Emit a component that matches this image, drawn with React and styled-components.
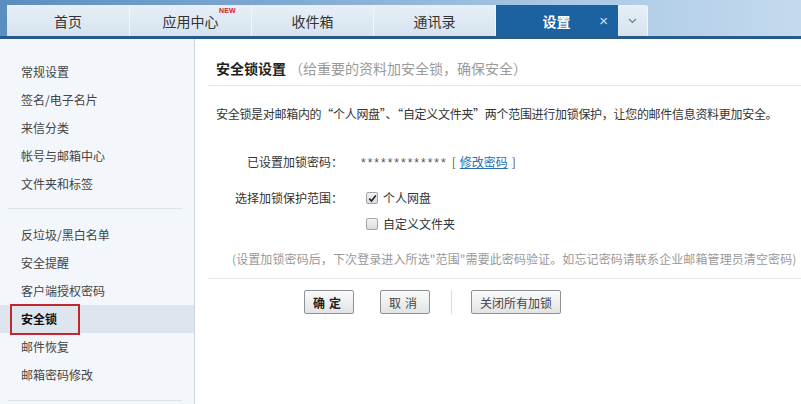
import React from "react";
import styled, { createGlobalStyle } from "styled-components";

const GlobalStyle = createGlobalStyle`
    html, body {
        margin: 0;
        padding: 0;
        background: #ffffff;
    }
    body {
        font-family: "Noto Sans CJK SC", "Liberation Sans", sans-serif;
        color: #333;
    }
`;

const Page = styled.div`
    width: 801px;
    height: 404px;
    display: flex;
    flex-direction: column;
    overflow: hidden;
`;

const TopBar = styled.div`
    height: 31px;
    padding: 5px 0 0 7px;
    display: flex;
    align-items: flex-end;
    background: linear-gradient(to right, #5a8ec0 0%, #7fa9d2 35%, #a9c8e5 70%, #c4daee 100%);
    border-bottom: 3px solid #27598a;
    flex-shrink: 0;
`;

const Tab = styled.div`
    position: relative;
    width: ${(p) => p.$w || 120}px;
    height: 31px;
    display: flex;
    align-items: center;
    justify-content: center;
    font-size: 14px;
    color: ${(p) => (p.$active ? "#ffffff" : "#333")};
    font-weight: ${(p) => (p.$active ? 700 : 400)};
    background: ${(p) =>
        p.$active ? "#1d62a0" : "linear-gradient(#e8eff7, #d5e3ef)"};
    border-right: 1px solid ${(p) => (p.$active ? "#1d62a0" : "#f3f7fb")};
    border-top-right-radius: ${(p) => (p.$last ? "3px" : "0")};
`;

const NewBadge = styled.span`
    position: absolute;
    top: 2px;
    left: 89px;
    font-family: "Liberation Sans", sans-serif;
    font-size: 7px;
    font-weight: 700;
    color: #d8202a;
    letter-spacing: 0.2px;
`;

const CloseMark = styled.span`
    position: absolute;
    right: 9px;
    top: 7px;
    font-family: "Liberation Sans", sans-serif;
    font-size: 15px;
    font-weight: 400;
    color: #cfe2f3;
`;

const Body = styled.div`
    flex: 1;
    display: flex;
    min-height: 0;
`;

const Sidebar = styled.div`
    width: 195px;
    flex-shrink: 0;
    background: #f3f6fb;
    border-right: 1px solid #cbd3dc;
    padding-top: 19px;
    box-sizing: border-box;
`;

const NavItem = styled.div`
    position: relative;
    height: 28px;
    line-height: 28px;
    padding-left: 21px;
    font-size: 12px;
    color: ${(p) => (p.$active ? "#111" : "#444")};
    font-weight: ${(p) => (p.$active ? 700 : 400)};
    background: ${(p) => (p.$active ? "#dde5ee" : "transparent")};

    ${(p) =>
        p.$active &&
        `
        &::after {
            content: "";
            position: absolute;
            left: 10px;
            top: -1px;
            width: 66px;
            height: 27px;
            border: 2px solid #c4262e;
        }
    `}
`;

const NavDivider = styled.div`
    height: 1px;
    background: #dde3ea;
    margin: ${(p) => p.$m || "10px 12px 12px 8px"};
`;

const Main = styled.div`
    flex: 1;
    padding-left: 13px;
    background: #fff;
`;

const SectionHead = styled.div`
    height: 47px;
    box-sizing: border-box;
    padding: 0 0 7px 8px;
    display: flex;
    align-items: flex-end;
    border-bottom: 1px solid #e3e6ea;
`;

const HeadTitle = styled.span`
    font-size: 14px;
    line-height: 20px;
    font-weight: 700;
    color: #222;
`;

const HeadSub = styled.span`
    font-size: 14px;
    line-height: 20px;
    color: #9a9a9a;
    margin-left: 3px;
`;

const Desc = styled.div`
    margin: 18px 0 0 8px;
    font-size: 12px;
    line-height: 20px;
    color: #333;
    letter-spacing: -0.3px;
    white-space: nowrap;
`;

const Form = styled.div`
    margin-top: 28px;
    display: grid;
    grid-template-columns: 135px 1fr;
    column-gap: 18px;
    align-items: center;
`;

const Label = styled.div`
    text-align: right;
    font-size: 12px;
    line-height: 20px;
    color: #333;
    align-self: start;
    margin-top: ${(p) => p.$mt || 0}px;
`;

const Value = styled.div`
    font-size: 12px;
    line-height: 20px;
    color: #555;
`;

const Stars = styled.span`
    font-family: "Liberation Sans", sans-serif;
    color: #555;
    letter-spacing: 2px;
`;

const Bracket = styled.span`
    margin: 0 4px;
    color: #555;
`;

const Link = styled.a`
    color: #2a6db0;
    text-decoration: underline;
    cursor: pointer;
`;

const CheckList = styled.div`
    display: flex;
    flex-direction: column;
    gap: 6px;
    margin: ${(p) => p.$mt || 0}px 0 0 5px;
`;

const CheckRow = styled.label`
    display: flex;
    align-items: center;
    gap: 5px;
    font-size: 12px;
    line-height: 20px;
    color: #333;
`;

const Box = styled.span`
    width: 10px;
    height: 10px;
    border: 1px solid #9ea4aa;
    border-radius: 2px;
    background: linear-gradient(#f3f3f3, #d9dcdf);
    display: flex;
    align-items: center;
    justify-content: center;
`;

const Note = styled.div`
    margin: 15px 0 0 24px;
    font-size: 12px;
    line-height: 20px;
    color: #999;
    white-space: nowrap;
    letter-spacing: 0.1px;
`;

const Divider = styled.div`
    height: 1px;
    background: #e3e6ea;
    margin-top: 9px;
`;

const Actions = styled.div`
    display: flex;
    align-items: center;
    padding: 11px 0 0 96px;
`;

const Button = styled.button`
    height: 24px;
    width: ${(p) => p.$w}px;
    margin-right: ${(p) => p.$mr || 0}px;
    padding: 0;
    border: 1px solid #8e9196;
    border-radius: 2px;
    background: linear-gradient(#fbfbfb, #e2e3e5);
    font-family: "Noto Sans CJK SC", sans-serif;
    font-size: 12px;
    font-weight: ${(p) => (p.$bold ? 700 : 400)};
    color: ${(p) => (p.$bold ? "#222" : "#444")};
    letter-spacing: ${(p) => p.$ls || 0}px;
`;

const Sep = styled.span`
    width: 1px;
    height: 24px;
    background: #dcdcdc;
    margin-right: 19px;
`;

const CheckMark = () => (
    <svg width="9" height="9" viewBox="0 0 9 9">
        <path d="M1.3 4.6 L3.5 7 L7.8 1.5" stroke="#222" strokeWidth="1.6" fill="none" />
    </svg>
);

const Chevron = () => (
    <svg width="9" height="6" viewBox="0 0 9 6">
        <path d="M1 1 L4.5 4.5 L8 1" stroke="#6a7784" strokeWidth="1.1" fill="none" />
    </svg>
);

const topNav = ["首页", "应用中心", "收件箱", "通讯录"];
const navGroupA = ["常规设置", "签名/电子名片", "来信分类", "帐号与邮箱中心", "文件夹和标签"];
const navGroupB = ["反垃圾/黑白名单", "安全提醒", "客户端授权密码", "安全锁", "邮件恢复", "邮箱密码修改"];

export default function App() {
    return (
        <Page>
            <GlobalStyle />
            <TopBar>
                {topNav.map((t, i) => (
                    <Tab key={t} $w={i === 0 ? 122 : 121}>
                        {t}
                        {t === "应用中心" && <NewBadge>NEW</NewBadge>}
                    </Tab>
                ))}
                <Tab $active $w={121}>
                    设置
                    <CloseMark>×</CloseMark>
                </Tab>
                <Tab $w={29} $last>
                    <Chevron />
                </Tab>
            </TopBar>
            <Body>
                <Sidebar>
                    {navGroupA.map((t) => (
                        <NavItem key={t}>{t}</NavItem>
                    ))}
                    <NavDivider />
                    {navGroupB.map((t) => (
                        <NavItem key={t} $active={t === "安全锁"}>{t}</NavItem>
                    ))}
                    <NavDivider $m="11px 12px 0 8px" />
                </Sidebar>
                <Main>
                    <SectionHead>
                        <HeadTitle>安全锁设置</HeadTitle>
                        <HeadSub>（给重要的资料加安全锁，确保安全）</HeadSub>
                    </SectionHead>
                    <Desc>
                        安全锁是对邮箱内的“个人网盘”、“自定义文件夹”两个范围进行加锁保护，让您的邮件信息资料更加安全。
                    </Desc>
                    <Form>
                        <Label>已设置加锁密码：</Label>
                        <Value>
                            <Stars>*************</Stars>
                            <Bracket>[</Bracket>
                            <Link>修改密码</Link>
                            <Bracket>]</Bracket>
                        </Value>
                        <Label $mt={15}>选择加锁保护范围：</Label>
                        <CheckList $mt={15}>
                            <CheckRow>
                                <Box>
                                    <CheckMark />
                                </Box>
                                个人网盘
                            </CheckRow>
                            <CheckRow>
                                <Box />
                                自定义文件夹
                            </CheckRow>
                        </CheckList>
                    </Form>
                    <Note>
                        (设置加锁密码后，下次登录进入所选"范围"需要此密码验证。如忘记密码请联系企业邮箱管理员清空密码)
                    </Note>
                    <Divider />
                    <Actions>
                        <Button $w={50} $mr={26} $bold $ls={4}>确定</Button>
                        <Button $w={50} $mr={21} $ls={4}>取消</Button>
                        <Sep />
                        <Button $w={90}>关闭所有加锁</Button>
                    </Actions>
                </Main>
            </Body>
        </Page>
    );
}
